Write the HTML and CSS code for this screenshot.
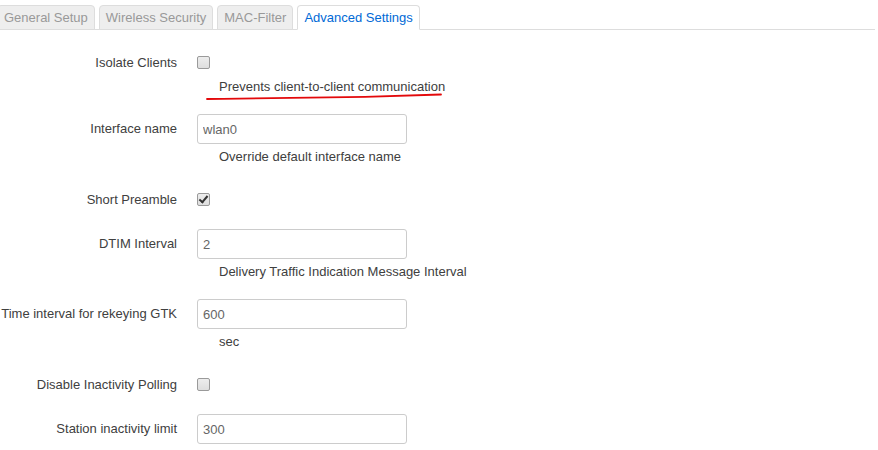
FILE: index.html
```html
<!DOCTYPE html>
<html>
<head>
<meta charset="utf-8">
<link rel="stylesheet" href="styles.css">
</head>
<body>
<ul class="tabs">
  <li class="tab"><a>General Setup</a></li>
  <li class="tab"><a>Wireless Security</a></li>
  <li class="tab"><a>MAC-Filter</a></li>
  <li class="tab active"><a>Advanced Settings</a></li>
</ul>
<div class="section">
  <div class="row check-row">
    <label class="title">Isolate Clients</label>
    <div class="field">
      <input type="checkbox" class="cb">
      <div class="desc">Prevents client-to-client communication</div>
      <svg class="scribble" width="250" height="12" viewBox="0 0 250 12"><path d="M2 8 C 60 7.2, 120 6.8, 160 5.8 S 220 4, 236 3.5" fill="none" stroke="#e3090b" stroke-width="1.8" stroke-linecap="round"/></svg>
    </div>
  </div>
  <div class="row">
    <label class="title">Interface name</label>
    <div class="field">
      <input type="text" class="txt" value="wlan0">
      <div class="desc">Override default interface name</div>
    </div>
  </div>
  <div class="row check-row">
    <label class="title">Short Preamble</label>
    <div class="field">
      <input type="checkbox" class="cb" checked>
    </div>
  </div>
  <div class="row">
    <label class="title">DTIM Interval</label>
    <div class="field">
      <input type="text" class="txt" value="2">
      <div class="desc">Delivery Traffic Indication Message Interval</div>
    </div>
  </div>
  <div class="row">
    <label class="title">Time interval for rekeying GTK</label>
    <div class="field">
      <input type="text" class="txt" value="600">
      <div class="desc">sec</div>
    </div>
  </div>
  <div class="row check-row">
    <label class="title">Disable Inactivity Polling</label>
    <div class="field">
      <input type="checkbox" class="cb">
    </div>
  </div>
  <div class="row">
    <label class="title">Station inactivity limit</label>
    <div class="field">
      <input type="text" class="txt" value="300">
    </div>
  </div>
</div>
</body>
</html>
```
FILE: styles.css
```css
html, body {
  margin: 0;
  padding: 0;
  background: #fff;
  overflow: hidden;
}
body {
  font-family: "Liberation Sans", Arial, Helvetica, sans-serif;
  font-size: 13px;
  color: #404040;
}
.tabs {
  list-style: none;
  margin: 0 0 0 -3px;
  padding: 5px 0 0 0;
  width: 878px;
  display: flex;
  border-bottom: 1px solid #ddd;
}
.tab {
  margin-right: 4px;
  margin-bottom: -1px;
}
.tab a {
  display: block;
  padding: 0 6px;
  line-height: 23px;
  border: 1px solid #ddd;
  border-radius: 4px 4px 0 0;
  background: #eee;
  color: #999;
}
.tab.active a {
  background: #fff;
  color: #0069d6;
  border-bottom-color: #fff;
}
.section {
  padding-top: 17px;
}
.row {
  display: flex;
  margin-bottom: 18px;
}
.title {
  width: 177px;
  flex: none;
  margin-right: 20px;
  text-align: right;
  line-height: 30px;
}
.check-row .title {
  line-height: 18px;
  padding-top: 7px;
}
.field {
  position: relative;
  display: flex;
  flex-direction: column;
  align-items: flex-start;
}
.txt {
  box-sizing: border-box;
  width: 210px;
  height: 30px;
  margin: 0;
  padding: 0 5px;
  border: 1px solid #ccc;
  border-radius: 3px;
  font-family: inherit;
  font-size: 13px;
  color: #666;
  background: #fff;
}
.cb {
  -webkit-appearance: none;
  appearance: none;
  position: relative;
  box-sizing: border-box;
  width: 13px;
  height: 13px;
  margin: 9px 0 5px 0;
  border: 1px solid #9a9a9a;
  border-radius: 2px;
  background: linear-gradient(#ededed, #dedede);
}
.cb:checked::after {
  content: "";
  position: absolute;
  left: 3px;
  top: 0px;
  width: 3px;
  height: 7px;
  border: solid #333;
  border-width: 0 2px 2px 0;
  transform: rotate(40deg);
}
.desc {
  padding: 4px 0 0 22px;
  line-height: 18px;
}
.scribble {
  position: absolute;
  left: 8px;
  top: 44px;
}
```
